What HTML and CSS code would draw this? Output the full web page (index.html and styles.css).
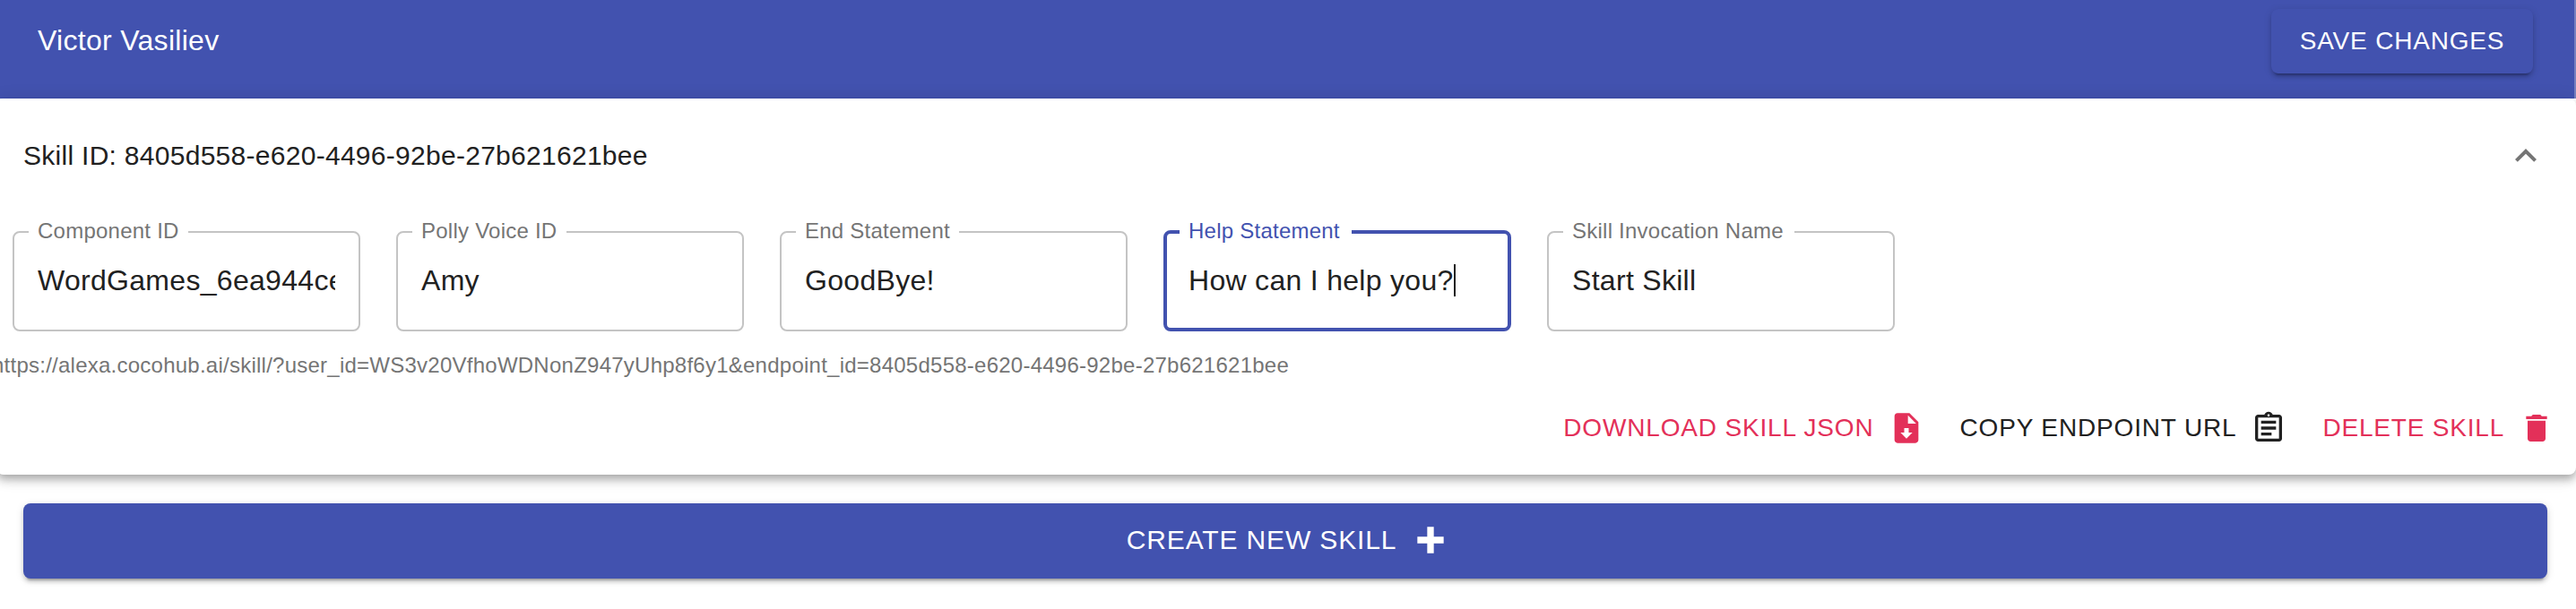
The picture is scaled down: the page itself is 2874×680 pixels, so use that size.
FILE: index.html
```html
<!DOCTYPE html>
<html lang="en">
<head>
<meta charset="utf-8">
<title>Skills</title>
<link rel="stylesheet" href="styles.css">
</head>
<body>
<header class="appbar">
  <span class="user">Victor Vasiliev</span>
  <button class="btn save" type="button">Save changes</button>
</header>
<main class="main">
  <section class="card">
    <div class="summary">
      <span class="skill-id">Skill ID: 8405d558-e620-4496-92be-27b621621bee</span>
      <svg class="chevron" viewBox="0 0 24 24"><path d="M12 8l-6 6 1.410 1.410L12 10.830l4.590 4.580L18 14z"/></svg>
    </div>
    <div class="fields">
      <fieldset class="field"><legend class="label l1"><span>Component ID</span></legend><div class="value">WordGames_6ea944ce</div></fieldset>
      <fieldset class="field"><legend class="label l2"><span>Polly Voice ID</span></legend><div class="value">Amy</div></fieldset>
      <fieldset class="field"><legend class="label l3"><span>End Statement</span></legend><div class="value">GoodBye!</div></fieldset>
      <fieldset class="field focused"><legend class="label l4"><span>Help Statement</span></legend><div class="value">How can I help you?<i class="caret"></i></div></fieldset>
      <fieldset class="field"><legend class="label l5"><span>Skill Invocation Name</span></legend><div class="value">Start Skill</div></fieldset>
    </div>
    <p class="url">https://alexa.cocohub.ai/skill/?user_id=WS3v20VfhoWDNonZ947yUhp8f6y1&amp;endpoint_id=8405d558-e620-4496-92be-27b621621bee</p>
    <div class="actions">
      <button class="btn red download" type="button">Download skill JSON
        <svg class="icon" viewBox="0 0 24 24"><path d="M14 2H6c-1.110 0-2 .89-2 2v16c0 1.110.89 2 2 2h12c1.110 0 2-.89 2-2V8l-6-6m-2 17l-4-4h2.500v-3h3v3H16l-4 4m1-10V3.500L18.500 9H13z"/></svg></button>
      <button class="btn copy" type="button">Copy endpoint URL
        <svg class="icon" viewBox="0 0 24 24"><path d="M7 15h7v2H7zm0-4h10v2H7zm0-4h10v2H7zm12-4h-4.180C14.400 1.840 13.300 1 12 1s-2.400.84-2.820 2H5c-1.100 0-2 .9-2 2v14c0 1.100.9 2 2 2h14c1.100 0 2-.9 2-2V5c0-1.100-.9-2-2-2zm-7-.25c.41 0 .75.34.75.75s-.34.75-.75.75-.75-.34-.75-.75.34-.75.75-.75zM19 19H5V5h14v14z"/></svg></button>
      <button class="btn red" type="button">Delete skill
        <svg class="icon" viewBox="0 0 24 24"><path d="M6 19c0 1.100.9 2 2 2h8c1.100 0 2-.9 2-2V7H6v12zM19 4h-3.500l-1-1h-5l-1 1H5v2h14V4z"/></svg></button>
    </div>
  </section>
  <button class="btn create" type="button">Create new skill
    <svg class="plus" viewBox="0 0 24 24"><path d="M20 14h-6v6h-4v-6H4v-4h6V4h4v6h6z"/></svg></button>
</main>
</body>
</html>
```

FILE: styles.css
```css
* { box-sizing: border-box; }
body {
  margin: 0;
  height: 680px;
  overflow: hidden;
  background: #fff;
  color: #212121;
  font-family: "Liberation Sans", Arial, sans-serif;
  font-size: 32px;
  letter-spacing: 0.00938em;
}
svg { display: block; fill: currentColor; flex: none; }

.appbar {
  display: flex;
  justify-content: space-between;
  align-items: flex-start;
  height: 110px;
  padding: 10px 46px 0 42px;
  border-right: 2px solid #7680bf;
  background: #4252af;
  color: #fff;
}
.user { line-height: 48px; margin-top: 11px; }

.btn {
  display: flex;
  align-items: center;
  border: 0;
  padding: 0;
  background: none;
  color: inherit;
  font: 28px/50px "Liberation Sans", Arial, sans-serif;
  letter-spacing: 0.02857em;
  text-transform: uppercase;
  white-space: nowrap;
}
.save, .create {
  justify-content: center;
  border-radius: 8px;
  background: #4252af;
  color: #fff;
  box-shadow: 0 6px 2px -4px rgba(0,0,0,.2), 0 4px 4px rgba(0,0,0,.14), 0 2px 10px rgba(0,0,0,.12);
}
.save { width: 292px; height: 72px; }

.card {
  position: relative;
  height: 420px;
  margin-left: -4px;
  padding-left: 4px;
  border-radius: 8px;
  background: #fff;
  box-shadow: 0 4px 8px -2px rgba(0,0,0,.2), 0 8px 10px rgba(0,0,0,.14), 0 2px 20px rgba(0,0,0,.12);
}
.summary {
  display: flex;
  justify-content: space-between;
  align-items: center;
  height: 128px;
  padding: 0 32px 0 26px;
}
.skill-id { font-size: 30px; letter-spacing: 0.28px; }
.chevron { width: 48px; height: 48px; color: #757575; }

.fields { display: flex; gap: 40px; padding: 7px 14px 0; }
.field {
  width: 388px;
  height: 125px;
  margin: 0;
  padding: 0 26px;
  border: 2px solid #c4c4c4;
  border-radius: 8px;
  min-width: 0;
}
.label {
  height: 28px;
  margin-left: -10px;
  padding: 0 0 0 10px;
  color: #757575;
  font-size: 24px;
  line-height: 26px;
  letter-spacing: 0.24px;
  white-space: nowrap;
}
.l1 { width: 178px; }
.l2 { width: 172px; }
.l3 { width: 182px; }
.l4 { width: 192px; }
.l5 { width: 258px; }
.value {
  display: flex;
  align-items: center;
  height: 38px;
  margin-top: 21px;
  overflow: hidden;
  white-space: nowrap;
}
.focused { border: 4px solid #4252af; padding: 0 24px; }
.focused .label { color: #4252af; }
.caret { width: 2px; height: 36px; background: #212121; }

.url {
  margin: 24px 0 0 -9px;
  color: #757575;
  font-size: 24px;
  line-height: 28px;
  letter-spacing: 0.245px;
  white-space: nowrap;
}
.actions {
  display: flex;
  justify-content: flex-end;
  gap: 40px;
  padding: 31px 24px 0 0;
}
.icon { width: 40px; height: 40px; margin-left: 16px; }
.download, .copy { letter-spacing: 0.84px; }
.red { color: #e33059; }

.create {
  position: relative;
  width: 2816px;
  height: 84px;
  margin: 32px 0 0 26px;
  padding: 0 0 2px 7px;
  font-size: 30px;
}
.plus { width: 44px; height: 44px; margin-left: 16px; }
```
